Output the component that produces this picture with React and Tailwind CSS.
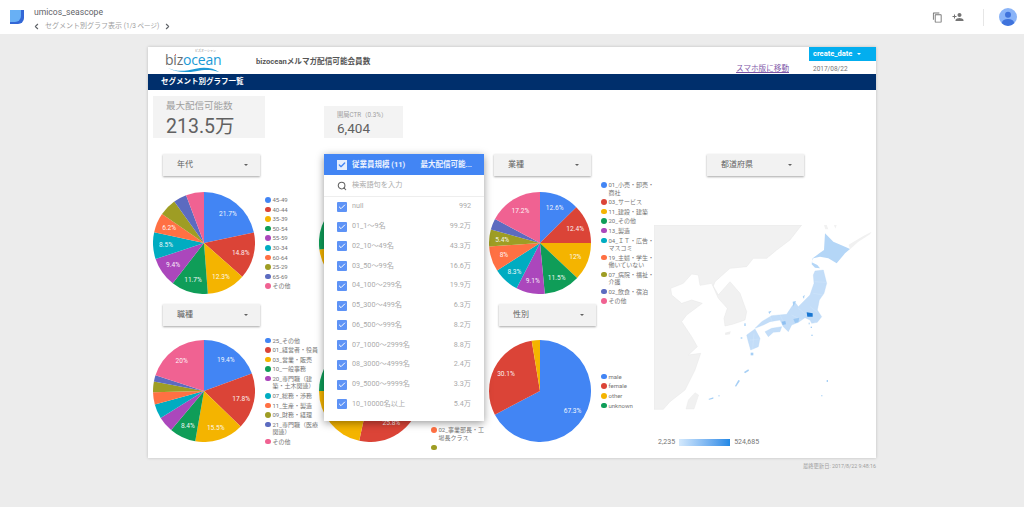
import React from "react";
import { Search, Check, ChevronLeft, ChevronRight } from "lucide-react";

const COLORS = ["#4285f4", "#db4437", "#f4b400", "#0f9d58", "#ab47bc", "#00acc1", "#ff7043", "#9e9d24", "#5c6bc0", "#f06292"];

const pieAge = [[21.7, "21.7%"], [14.8, "14.8%"], [12.3, "12.3%"], [11.7, "11.7%"], [9.4, "9.4%"], [8.5, "8.5%"], [6.2, "6.2%"], [5.5], [4.2], [5.7]];
const pieSize = [[26], [22], [25], [12], [4], [3], [2], [2], [2], [2]];
const pieIndustry = [[12.6, "12.6%"], [12.4, "12.4%"], [12, "12%"], [11.5, "11.5%"], [9.1, "9.1%"], [8.3, "8.3%"], [8, "8%"], [5.4, "5.4%"], [3.5], [17.2, "17.2%"]];
const pieJob = [[19.4, "19.4%"], [17.8, "17.8%"], [15.5, "15.5%"], [8.4, "8.4%"], [5], [4.6], [3.8], [3.4], [2], [20, "20%"]];
const pieRole = [[27.6], [25.8, "25.8%"], [21.6], [14], [4], [3], [2], [1], [0.5], [0.5]];
const pieGender = [[67.3, "67.3%"], [30.1, "30.1%"], [2.6]];

const legendAge = ["45-49", "40-44", "35-39", "50-54", "55-59", "30-34", "60-64", "25-29", "65-69", "その他"];
const legendIndustry = ["01_小売・卸売・商社", "03_サービス", "11_建設・建築", "20_その他", "13_製造", "04_ＩＴ・広告・マスコミ", "19_主婦・学生・働いていない", "07_病院・福祉・介護", "02_飲食・宿泊", "その他"];
const legendJob = ["25_その他", "01_経営者・役員", "03_営業・販売", "10_一般事務", "20_専門職（建築・土木関連）", "07_総務・渉務", "11_生産・製造", "09_財務・経理", "21_専門職（医療関連）", "その他"];
const legendGender = ["male", "female", "other", "unknown"];

const sizes = [
  ["null", "992"],
  ["01_1～9名", "99.2万"],
  ["02_10～49名", "43.3万"],
  ["03_50～99名", "16.6万"],
  ["04_100～299名", "19.9万"],
  ["05_300～499名", "6.3万"],
  ["06_500～999名", "8.2万"],
  ["07_1000～2999名", "8.8万"],
  ["08_3000～4999名", "2.4万"],
  ["09_5000～9999名", "3.3万"],
  ["10_10000名以上", "5.4万"],
];

function Pie({ data }) {
  const total = data.reduce((s, d) => s + d[0], 0);
  let acc = 0;
  const pt = (a, r) => [51 + r * Math.sin(a), 51 - r * Math.cos(a)];
  return (
    <svg viewBox="0 0 102 102" className="w-[102px] h-[102px] shrink-0">
      {data.map((d, i) => {
        const a0 = (acc / total) * Math.PI * 2;
        acc += d[0];
        const a1 = (acc / total) * Math.PI * 2;
        const [x0, y0] = pt(a0, 51);
        const [x1, y1] = pt(a1, 51);
        const large = a1 - a0 > Math.PI ? 1 : 0;
        return <path key={i} d={`M51 51L${x0} ${y0}A51 51 0 ${large} 1 ${x1} ${y1}Z`} fill={COLORS[i]} />;
      })}
      {(() => {
        let run = 0;
        return data.map((d, i) => {
          const mid = ((run + d[0] / 2) / total) * Math.PI * 2;
          run += d[0];
          if (!d[1]) return null;
          const [x, y] = pt(mid, 38);
          return (
            <text key={i} x={x} y={y + 2.4} textAnchor="middle" fill="#fff" fontSize="6.6" opacity="0.92">
              {d[1]}
            </text>
          );
        });
      })()}
    </svg>
  );
}

function Legend({ items, width, first = 0, className = "" }) {
  return (
    <ul className={`flex flex-col shrink-0 gap-[2.1px] ml-[10px] text-[6px] leading-[7.5px] text-[#757575] ${width} ${className}`}>
      {items.map((t, i) => (
        <li key={i} className="flex gap-[2px]">
          <span className="w-[5.5px] h-[5.5px] mt-[1px] rounded-full shrink-0" style={{ background: COLORS[first + i] }} />
          <span>{t}</span>
        </li>
      ))}
    </ul>
  );
}

function Filter({ label, className }) {
  return (
    <div className={`h-[22px] w-[97px] bg-[#f2f2f2] shadow-[0_1px_2px_rgba(0,0,0,0.35)] flex items-center justify-between pl-[14px] pr-[12px] text-[8px] text-[#616161] ${className}`}>
      <span>{label}</span>
      <span className="w-0 h-0 border-x-[2px] border-x-transparent border-t-[2px] border-t-[#616161]" />
    </div>
  );
}

function JapanMap() {
  return (
    <svg viewBox="12 75 660 555" className="w-[220px] h-[185px]">
      <path
        d="M12 75L455 75L420 120L380 150L350 175L310 175L290 200L240 205L195 245L190 258L205 285L240 245L270 280L290 335L285 360L250 372L225 378L222 355L232 325L205 295L185 250L150 256L145 225L125 222L100 250L62 265L65 285L95 310L125 300L157 310L110 345L95 365L125 410L142 440L115 465L152 460L135 510L105 570L60 605L40 628L12 628Z"
        fill="#f1f1f1"
        stroke="#e6e6e6"
        strokeWidth="1.5"
      />
      <path d="M135 578L146 585L132 627L108 627L115 600Z" fill="#f1f1f1" stroke="#e6e6e6" />
      <path d="M225 398L242 394L240 403L226 405Z" fill="#eee" />
      <path d="M522 75L530 75L535 88L526 88Z M552 75L560 75L556 86Z M596 134L640 108L665 95L660 103L625 125L600 148Z" fill="#f1f1f1" />
      <g transform="translate(240 75)">
        <path
          d="M285 25L310 50L345 65L360 72L345 85L320 115L295 100L270 95L250 100L245 112L262 120L270 130L255 128L245 118L248 100L268 85L282 75Z"
          fill="#b4d6f7"
        />
        <g fill="#c3ddf8" stroke="#b4d4f6" strokeWidth="1">
          <path d="M255 138L280 135L290 175L282 205L268 225L262 255L275 275L262 292L245 295L240 285L225 278L205 292L185 300L175 320L160 305L150 285L120 290L100 300L75 310L95 290L125 272L170 268L185 245L195 232L205 245L240 210L252 175L250 150Z" />
          <path d="M105 320L125 310L155 305L150 320L130 322L115 335Z" />
          <path d="M50 330L75 312L90 340L85 365L62 375L55 350Z" />
        </g>
        <g fill="none" stroke="#d9e9fb" strokeWidth="1">
          <path d="M254 170L288 172M250 205L280 210M240 245L262 262M205 250L230 270M185 270L215 285M150 270L165 300M120 275L128 292M60 345L88 342M72 325L68 372" />
        </g>
        <path d="M230 262L248 265L248 275L232 275Z" fill="#1976d2" />
        <path d="M190 282L208 278L205 292L195 294Z" fill="#9cc8f3" />
        <path d="M155 290L166 288L168 298L158 300Z" fill="#8fc0f1" />
      </g>
      <g fill="#a6cff5">
        <path d="M428 305L438 303L430 320Z M458 290L464 284L462 296Z M355 335L365 332L358 342Z" />
        <rect x="272" y="412" width="5" height="4" />
        <rect x="283" y="370" width="4" height="8" />
        <rect x="302" y="458" width="8" height="8" />
        <rect x="476" y="368" width="3" height="5" />
        <rect x="482" y="380" width="4" height="4" />
        <rect x="484" y="404" width="4" height="4" />
        <path d="M255 558L265 540L270 542L258 560Z M282 516L295 508L297 512L285 520Z M175 597L190 592L190 596L178 599Z" />
        <rect x="530" y="540" width="4" height="6" />
        <rect x="514" y="585" width="3" height="4" />
        <rect x="205" y="586" width="4" height="3" />
      </g>
    </svg>
  );
}

export default function App() {
  return (
    <div className="h-[507px] w-[1024px] overflow-hidden bg-[#ececec] font-['Roboto','Noto_Sans_CJK_JP',sans-serif]">
      {/* top bar */}
      <header className="h-[34px] bg-white flex items-center pl-[9px] pr-[7px]">
        <svg viewBox="0 0 16 16" className="w-[16px] h-[16px] shrink-0">
          <path d="M1 1h14v8a6 6 0 0 1-6 6H1z" fill="#3367d6" />
          <path d="M1 1h11v6a6 6 0 0 1-6 6H1z" fill="#68b0f5" />
        </svg>
        <div className="ml-[9px] flex flex-col mt-[4px]">
          <span className="text-[8.6px] leading-[12px] text-[#5f6368]">umicos_seascope</span>
          <div className="flex items-center text-[#9e9e9e] text-[7px] leading-[12px] mt-[2px]">
            <ChevronLeft className="w-[9px] h-[9px] text-[#5f6368] -ml-[2px]" strokeWidth={3} />
            <span className="ml-[4px]">セグメント別グラフ表示 <span className="text-[6.5px]">(1/3 ページ)</span></span>
            <ChevronRight className="w-[9px] h-[9px] text-[#5f6368] ml-[4px]" strokeWidth={3} />
          </div>
        </div>
        <div className="ml-auto flex items-center">
          <svg viewBox="0 0 24 24" className="w-[11px] h-[11px]" fill="#757575">
            <path d="M16 1H4c-1.1 0-2 .9-2 2v14h2V3h12V1zm3 4H8c-1.1 0-2 .9-2 2v14c0 1.1.9 2 2 2h11c1.1 0 2-.9 2-2V7c0-1.1-.9-2-2-2zm0 16H8V7h11v14z" />
          </svg>
          <svg viewBox="0 0 24 24" className="w-[12px] h-[12px] ml-[9px]" fill="#757575">
            <path d="M15 12c2.21 0 4-1.79 4-4s-1.79-4-4-4-4 1.79-4 4 1.79 4 4 4zm-9-2V7H4v3H1v2h3v3h2v-3h3v-2H6zm9 4c-2.67 0-8 1.34-8 4v2h16v-2c0-2.66-5.33-4-8-4z" />
          </svg>
          <div className="w-px h-[17px] bg-[#e6e6e6] ml-[19px]" />
          <svg viewBox="0 0 18 18" className="w-[18px] h-[18px] ml-[15px]">
            <defs>
              <clipPath id="av"><circle cx="9" cy="9" r="9" /></clipPath>
            </defs>
            <circle cx="9" cy="9" r="9" fill="#8ab4f8" />
            <g clipPath="url(#av)" fill="#3f73dc">
              <circle cx="9" cy="6.8" r="3" />
              <ellipse cx="9" cy="14.5" rx="6" ry="3.5" />
            </g>
          </svg>
        </div>
      </header>

      {/* report canvas */}
      <div className="relative w-[728px] h-[411px] mx-auto mt-[13px] bg-white shadow-[0_0_3px_rgba(0,0,0,0.2)]">
        <div className="flex h-[27px]">
          <div className="relative w-[58px] ml-[17px] mt-[4px] h-[22px]">
            <span className="absolute top-[-1px] left-[30px] text-[3px] leading-[3px] text-[#888] whitespace-nowrap">ビズオーシャン</span>
            <span className="absolute top-[2px] left-[0px] text-[14px] leading-[14px] tracking-[-0.2px] font-['Open_Sans',sans-serif] text-[#1a9ad6]">
              <span className="text-[#6b6b6b]">biz</span>ocean
            </span>
            <span className="absolute left-[9.5px] top-[2.5px] w-[1.5px] h-[1.5px] rounded-full bg-[#e04040]" />
            <svg viewBox="0 0 60 8" className="absolute left-0 top-[15px] w-[58px] h-[7px]">
              <path d="M0 2C12 8 22 5 32 3C42 1 52 2 59 7C50 4 42 4 32 6C20 8 8 7 0 2Z" fill="#1e9ad6" />
            </svg>
          </div>
          <h1 className="ml-[33px] mt-[9px] text-[7.6px] leading-[11px] font-bold text-[#555]">bizoceanメルマガ配信可能会員数</h1>
          <a className="ml-auto mt-[16px] text-[7.6px] leading-[11px] text-[#7e57a8] underline">スマホ版に移動</a>
          <div className="ml-[20px] w-[67px]">
            <div className="h-[14px] bg-[#03aeef] text-white text-[7.5px] font-bold flex items-center pl-[4px] gap-[5px]">
              create_date
              <span className="w-0 h-0 border-x-[2px] border-x-transparent border-t-[2px] border-t-white" />
            </div>
            <div className="mt-[3px] pl-[4px] text-[6.5px] leading-[10px] text-[#757575]">2017/08/22</div>
          </div>
        </div>
        <div className="h-[16px] bg-[#002f6c] flex items-center pl-[13px] text-[7.5px] font-bold text-white">セグメント別グラフ一覧</div>

        {/* scorecards */}
        <div className="flex items-start h-[64px] pt-[6px]">
          <div className="ml-[5px] w-[112px] h-[42px] bg-[#f3f3f3] pl-[13px] pt-[4px]">
            <div className="text-[9.5px] leading-[12px] text-[#9e9e9e]">最大配信可能数</div>
            <div className="text-[19.5px] leading-[24px] mt-[3px] text-[#616161]">213.5万</div>
          </div>
          <div className="ml-[59px] mt-[10px] w-[79px] h-[32px] bg-[#f3f3f3] pl-[13px] pt-[5px]">
            <div className="text-[6.3px] leading-[9px] text-[#9e9e9e]">開局CTR（0.3%）</div>
            <div className="text-[13.5px] leading-[16px] text-[#616161]">6,404</div>
          </div>
        </div>

        {/* charts */}
        <div className="grid grid-cols-[166px_170px_171px_221px] grid-rows-[150px_150px]">
          <section>
            <Filter label="年代" className="ml-[15px]" />
            <div className="flex items-center h-[102px] mt-[16px] ml-[5px]">
              <Pie data={pieAge} />
              <Legend items={legendAge} width="w-[54px]" />
            </div>
          </section>
          <section>
            <div className="h-[22px]" />
            <div className="flex items-center h-[102px] mt-[16px] ml-[5px]">
              <Pie data={pieSize} />
            </div>
          </section>
          <section>
            <Filter label="業種" className="ml-[10px]" />
            <div className="flex items-center h-[102px] mt-[16px] ml-[5px]">
              <Pie data={pieIndustry} />
              <Legend items={legendIndustry} width="w-[54px]" />
            </div>
          </section>
          <section className="row-span-2">
            <Filter label="都道府県" className="ml-[52px]" />
            <div className="mt-[49px] -ml-[1px]">
              <JapanMap />
            </div>
            <div className="flex items-center mt-[28px] ml-[3px] text-[7px] leading-[9px] text-[#757575]">
              <span>2,235</span>
              <span className="w-[51px] h-[7px] ml-[4px] bg-gradient-to-r from-[#d4e9fc] to-[#1e88e5]" />
              <span className="ml-[4px]">524,685</span>
            </div>
          </section>
          <section>
            <Filter label="職種" className="ml-[15px]" />
            <div className="flex items-center h-[102px] mt-[14px] ml-[5px]">
              <Pie data={pieJob} />
              <Legend items={legendJob} width="w-[54px]" />
            </div>
          </section>
          <section>
            <div className="h-[22px]" />
            <div className="flex items-center h-[102px] mt-[14px] ml-[5px]">
              <Pie data={pieRole} />
              <Legend items={["02_事業部長・工場長クラス", ""]} first={6} width="w-[54px]" className="self-end -mb-[8px]" />
            </div>
          </section>
          <section>
            <Filter label="性別" className="ml-[15px]" />
            <div className="flex items-center h-[102px] mt-[14px] ml-[5px]">
              <Pie data={pieGender} />
              <Legend items={legendGender} width="w-[54px]" />
            </div>
          </section>
        </div>

        {/* open dropdown over the charts */}
        <div className="absolute left-[176px] top-[107px] w-[160px] h-[267px] bg-white shadow-[0_2px_8px_rgba(0,0,0,0.4)]">
          <div className="h-[21px] bg-[#4285f4] flex items-center pl-[13px] pr-[12px] text-[7.5px] font-bold text-white/90">
            <span className="w-[10px] h-[10px] bg-[#e3edfd] flex items-center justify-center shrink-0">
              <Check className="w-[8px] h-[8px] text-[#4285f4]" strokeWidth={4} />
            </span>
            <span className="ml-[5px]">従業員規模 (11)</span>
            <span className="ml-auto">最大配信可能...</span>
          </div>
          <div className="h-[22px] flex items-center pl-[13px] border-b border-[#eee] text-[7.2px] text-[#aaa]">
            <Search className="w-[10px] h-[10px] text-[#616161]" strokeWidth={2.5} />
            <span className="ml-[5px]">検索語句を入力</span>
          </div>
          <ul className="flex flex-col">
            {sizes.map(([name, value]) => (
              <li key={name} className="h-[19.75px] flex items-center pl-[13px] pr-[13px] text-[7.2px] text-[#aaa]">
                <span className="w-[10px] h-[10px] rounded-[1px] bg-[#5e93f6] flex items-center justify-center shrink-0">
                  <Check className="w-[8px] h-[8px] text-white" strokeWidth={3} />
                </span>
                <span className="ml-[5px]">{name}</span>
                <span className="ml-auto">{value}</span>
              </li>
            ))}
          </ul>
        </div>
      </div>

      <div className="w-[728px] mx-auto mt-[4px] text-right text-[5.3px] leading-[8px] text-[#9e9e9e]">最終更新日: 2017/8/22 9:48:16</div>
    </div>
  );
}
